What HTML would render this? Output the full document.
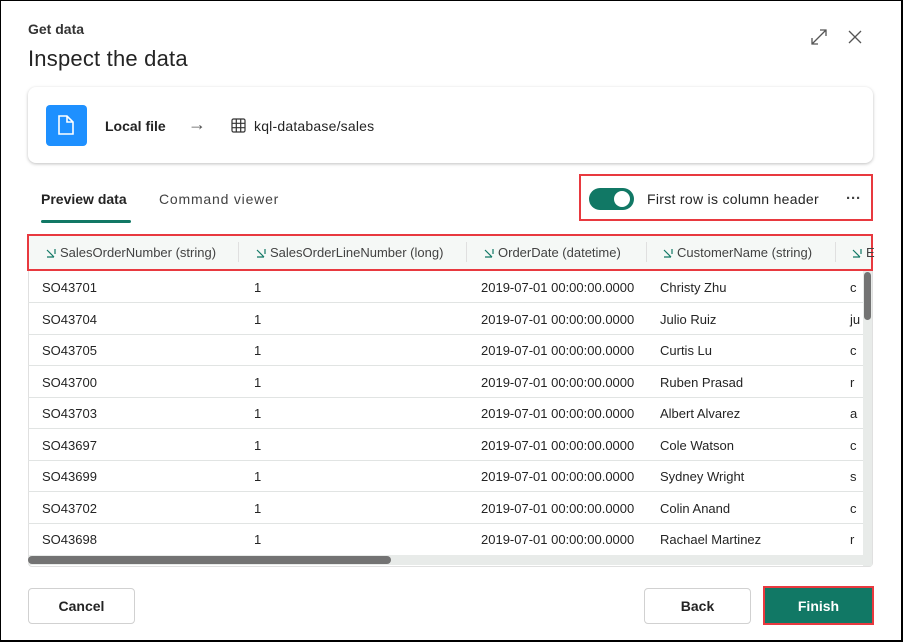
<!DOCTYPE html>
<html><head><meta charset="utf-8"><style>
*{margin:0;padding:0;box-sizing:border-box}
body{width:903px;height:642px;overflow:hidden;background:#fff;font-family:"Liberation Sans",sans-serif;color:#242424;position:relative}
.frame{position:absolute;left:0;top:0;width:903px;height:642px;border:1px solid #000;border-width:1px 2px 2px 1px}
.a{position:absolute;white-space:nowrap}
.row{position:absolute;left:28px;width:835px;height:32px;border-bottom:1px solid #e1e4e3;font-size:13px}
.row span{position:absolute;top:9px}
.hd{font-size:13px;color:#424242;top:245px}
.ic{display:inline-block;width:10px;height:10px;margin-right:4px;vertical-align:-1px}
.sep{position:absolute;top:242px;width:1px;height:20px;background:#e0e0e0}
.btn{position:absolute;height:36px;border:1px solid #d1d1d1;border-radius:4px;font-size:14px;font-weight:bold;text-align:center;line-height:35px;background:#fff}
</style></head><body>
<div class="a" style="left:28px;top:21px;font-size:14px;font-weight:bold;color:#333">Get data</div>
<div class="a" style="left:28px;top:46px;font-size:22px;color:#242424;letter-spacing:0.2px">Inspect the data</div>
<svg class="a" style="left:810px;top:28px" width="18" height="18" viewBox="0 0 18 18" fill="none" stroke="#555" stroke-width="1.3"><path d="M2 16L16 2M10 2h6v6M2 10v6h6"/></svg>
<svg class="a" style="left:848px;top:30px" width="14" height="14" viewBox="0 0 14 14" stroke="#555" stroke-width="1.3"><path d="M1 1L13 13M13 1L1 13"/></svg>

<div class="a" style="left:28px;top:87px;width:845px;height:76px;border-radius:8px;box-shadow:0 1px 3px rgba(0,0,0,.25);background:#fff"></div>
<div class="a" style="left:46px;top:105px;width:41px;height:41px;background:#1e90ff;border-radius:4px"></div>
<svg class="a" style="left:57px;top:114px" width="18" height="22" viewBox="0 0 18 22" fill="none" stroke="#fff" stroke-width="1.6"><path d="M2 2h8l6 6v12H2z M10 2v6h6"/></svg>
<div class="a" style="left:105px;top:118px;font-size:14px;font-weight:bold">Local file</div>
<div class="a" style="left:188px;top:114px;font-size:18px;color:#555">→</div>
<svg class="a" style="left:231px;top:118px" width="15" height="15" viewBox="0 0 15 15" fill="none" stroke="#333" stroke-width="1.2"><rect x="1" y="1" width="13" height="13" rx="1.5"/><path d="M1 5.3h13M1 9.7h13M5.3 1v13M9.7 1v13"/></svg>
<div class="a" style="left:254px;top:118px;font-size:14px;letter-spacing:0.2px">kql-database/sales</div>

<div class="a" style="left:41px;top:191px;font-size:14px;font-weight:bold">Preview data</div>
<div class="a" style="left:41px;top:220px;width:90px;height:3px;background:#117865;border-radius:2px"></div>
<div class="a" style="left:159px;top:191px;font-size:14px;color:#424242;letter-spacing:0.8px">Command viewer</div>

<div class="a" style="left:579px;top:174px;width:294px;height:47px;border:2px solid #e8393f"></div>
<div class="a" style="left:589px;top:188px;width:45px;height:22px;background:#117865;border-radius:11px"></div>
<div class="a" style="left:614px;top:191px;width:16px;height:16px;background:#fff;border-radius:50%"></div>
<div class="a" style="left:647px;top:191px;font-size:14px;color:#242424;letter-spacing:0.3px">First row is column header</div>
<div class="a" style="left:846px;top:190px;font-size:15px;font-weight:bold;color:#424242">···</div>

<div class="a" style="left:28px;top:236px;width:845px;height:331px;border:1px solid #e0e0e0;border-radius:4px"></div>
<div class="a" style="left:29px;top:236px;width:843px;height:34px;background:#f5f8f6"></div>
<div class="a" style="left:27px;top:234px;width:846px;height:37px;border:2px solid #e8393f"></div>
<svg width="0" height="0" style="position:absolute"><defs><g id="i"><path d="M1 2l7 7M1 9h7M9 1v5" stroke="#117865" stroke-width="1.2" fill="none"/></g></defs></svg>
<div class="a hd" style="left:46px"><svg class="ic" viewBox="0 0 10 10"><use href="#i"/></svg>SalesOrderNumber (string)</div>
<div class="sep" style="left:238px"></div>
<div class="a hd" style="left:256px"><svg class="ic" viewBox="0 0 10 10"><use href="#i"/></svg>SalesOrderLineNumber (long)</div>
<div class="sep" style="left:466px"></div>
<div class="a hd" style="left:484px"><svg class="ic" viewBox="0 0 10 10"><use href="#i"/></svg>OrderDate (datetime)</div>
<div class="sep" style="left:646px"></div>
<div class="a hd" style="left:663px"><svg class="ic" viewBox="0 0 10 10"><use href="#i"/></svg>CustomerName (string)</div>
<div class="sep" style="left:835px"></div>
<div class="a hd" style="left:852px"><svg class="ic" viewBox="0 0 10 10"><use href="#i"/></svg>E</div>

<div class="row" style="top:271px"><span style="left:14px">SO43701</span><span style="left:226px">1</span><span style="left:453px">2019-07-01 00:00:00.0000</span><span style="left:632px">Christy Zhu</span><span style="left:822px">c</span></div>
<div class="row" style="top:303px"><span style="left:14px">SO43704</span><span style="left:226px">1</span><span style="left:453px">2019-07-01 00:00:00.0000</span><span style="left:632px">Julio Ruiz</span><span style="left:822px">ju</span></div>
<div class="row" style="top:334px"><span style="left:14px">SO43705</span><span style="left:226px">1</span><span style="left:453px">2019-07-01 00:00:00.0000</span><span style="left:632px">Curtis Lu</span><span style="left:822px">c</span></div>
<div class="row" style="top:366px"><span style="left:14px">SO43700</span><span style="left:226px">1</span><span style="left:453px">2019-07-01 00:00:00.0000</span><span style="left:632px">Ruben Prasad</span><span style="left:822px">r</span></div>
<div class="row" style="top:397px"><span style="left:14px">SO43703</span><span style="left:226px">1</span><span style="left:453px">2019-07-01 00:00:00.0000</span><span style="left:632px">Albert Alvarez</span><span style="left:822px">a</span></div>
<div class="row" style="top:429px"><span style="left:14px">SO43697</span><span style="left:226px">1</span><span style="left:453px">2019-07-01 00:00:00.0000</span><span style="left:632px">Cole Watson</span><span style="left:822px">c</span></div>
<div class="row" style="top:460px"><span style="left:14px">SO43699</span><span style="left:226px">1</span><span style="left:453px">2019-07-01 00:00:00.0000</span><span style="left:632px">Sydney Wright</span><span style="left:822px">s</span></div>
<div class="row" style="top:492px"><span style="left:14px">SO43702</span><span style="left:226px">1</span><span style="left:453px">2019-07-01 00:00:00.0000</span><span style="left:632px">Colin Anand</span><span style="left:822px">c</span></div>
<div class="row" style="top:523px;border-bottom:none"><span style="left:14px">SO43698</span><span style="left:226px">1</span><span style="left:453px">2019-07-01 00:00:00.0000</span><span style="left:632px">Rachael Martinez</span><span style="left:822px">r</span></div>

<div class="a" style="left:863px;top:271px;width:9px;height:295px;background:#e8ebe9"></div>
<div class="a" style="left:864px;top:272px;width:7px;height:48px;background:#737373;border-radius:4px"></div>
<div class="a" style="left:29px;top:555px;width:834px;height:10px;background:#e8ebe9"></div>
<div class="a" style="left:28px;top:556px;width:363px;height:8px;background:#737373;border-radius:4px"></div>

<div class="btn" style="left:28px;top:588px;width:107px">Cancel</div>
<div class="btn" style="left:644px;top:588px;width:107px">Back</div>
<div class="a" style="left:763px;top:586px;width:111px;height:39px;border:2px solid #e8393f;background:#117865;color:#fff;font-size:14px;font-weight:bold;text-align:center;line-height:37px">Finish</div>
<div class="frame"></div>
</body></html>
